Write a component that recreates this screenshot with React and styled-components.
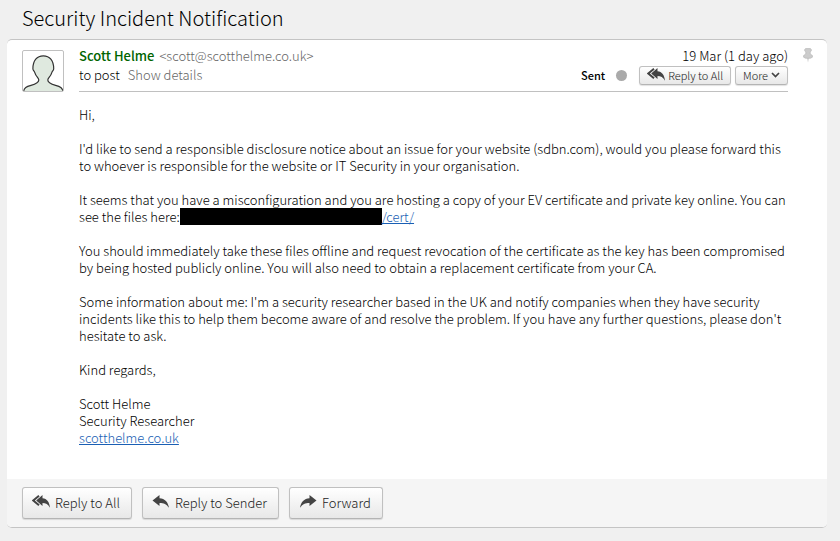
import styled, { createGlobalStyle } from "styled-components";

const GlobalStyle = createGlobalStyle`
  * {
    box-sizing: border-box;
  }

  body {
    margin: 0;
    background: #f0f0f0;
    color: #000;
    font-family: "Noto Sans CJK SC", "Open Sans", sans-serif;
    font-size: 13px;
    font-weight: 300;
    line-height: 17px;
  }
`

const ReplyIcon = ({ size = 18 }) => (
  <svg width={size} height={size} viewBox="0 0 18 18" fill="#444" aria-hidden="true">
    <path d="M.5 7.500 7.500 2v3.200c5.400.3 8.600 3.800 9.500 9.600-2.400-3.600-5.200-4.900-9.500-4.900v3z" />
  </svg>
)

const ReplyAllIcon = ({ size = 18 }) => (
  <svg width={size} height={size} viewBox="0 0 18 18" fill="#444" aria-hidden="true">
    <path d="M4.200 7.500 10.500 2v3.200c4.400.4 7 3.800 7.500 9.600-1.900-3.600-4.200-4.900-7.500-4.900v3z" />
    <path d="M7 2.700 1.300 7.500 7 12.300" fill="none" stroke="#444" strokeWidth="2" />
  </svg>
)

const ForwardIcon = () => (
  <svg width="18" height="18" viewBox="0 0 18 18" fill="#444" aria-hidden="true">
    <path d="M17.500 7.500 10.500 2v3.200C5.100 5.500 1.900 9 1 14.800c2.400-3.600 5.200-4.900 9.500-4.900v3z" />
  </svg>
)

const ChevronIcon = () => (
  <svg width="9" height="6" viewBox="0 0 9 6" fill="none" aria-hidden="true">
    <path d="M1 1 4.500 4.500 8 1" stroke="#444" strokeWidth="1.700" />
  </svg>
)

const PinIcon = () => (
  <svg width="10" height="15" viewBox="0 0 10 15" aria-hidden="true">
    <path d="M4 9.500h2L5 14.500z" fill="#ccc" />
    <path
      d="M2.500.6h5l.8 1v1.200L7.200 4v2l2.200 1.500v1.700L7.500 10.200h-5L.6 9.200V7.500L2.800 6V4L1.700 2.800V1.600z"
      fill="#ccc"
      stroke="#b8b8b8"
      strokeWidth=".7"
    />
  </svg>
)

const Person = () => (
  <svg width="40" height="40" viewBox="0 0 40 40" aria-hidden="true">
    <path
      d="M.5 41C1 36.500 3.500 35.500 8 34.300c5-1.300 7.800-2.500 7.800-5.300 0-2-3-3.500-4-7.300-.5-1.700-1.900-2.200-1.900-4C9.900 9.500 14 4.800 20.300 4.800S30.700 9.500 30.700 17.700c0 1.800-1.400 2.300-1.900 4-1 3.800-4 5.300-4 7.300 0 2.800 2.800 4 7.800 5.300 4.500 1.200 6.900 2.200 7.400 6.700"
      fill="#dfe9df"
      stroke="#333"
      strokeWidth="1.200"
    />
  </svg>
)

const App = () => {
  return (
    <>
      <GlobalStyle />
      <Page>
        <Subject>Security Incident Notification</Subject>
        <Card>
          <Message>
            <Avatar>
              <Person />
            </Avatar>
            <Content>
              <Header>
                <div>
                  <Line>
                    <Sender>Scott Helme</Sender>
                    <Muted>&lt;scott@scotthelme.co.uk&gt;</Muted>
                  </Line>
                  <Line $gap={8}>
                    <span>to post</span>
                    <DetailsLink href="#details">Show details</DetailsLink>
                  </Line>
                </div>
                <Meta>
                  <span>19 Mar (1 day ago)</span>
                  <Actions>
                    <Sent>Sent</Sent>
                    <Dot />
                    <SmallButton type="button">
                      <ReplyAllIcon />
                      Reply to All
                    </SmallButton>
                    <SmallButton type="button">
                      More
                      <ChevronIcon />
                    </SmallButton>
                  </Actions>
                </Meta>
              </Header>
              <Body>
                <p>Hi,</p>
                <p>
                  I'd like to send a responsible disclosure notice about an issue for your
                  website (sdbn.com), would you please forward this to whoever is responsible
                  for the website or IT Security in your organisation.
                </p>
                <p>
                  It seems that you have a misconfiguration and you are hosting a copy of your
                  EV certificate and private key online. You can see the files here:
                  <Redacted />
                  <a href="#cert">/cert/</a>
                </p>
                <p>
                  You should immediately take these files offline and request revocation of the
                  certificate as the key has been compromised by being hosted publicly online.
                  You will also need to obtain a replacement certificate from your CA.
                </p>
                <p>
                  Some information about me: I'm a security researcher based in the UK and
                  notify companies when they have security incidents like this to help them
                  become aware of and resolve the problem. If you have any further questions,
                  please don't hesitate to ask.
                </p>
                <p>Kind regards,</p>
                <p>
                  Scott Helme
                  <br />
                  Security Researcher
                  <br />
                  <a href="#scotthelme">scotthelme.co.uk</a>
                </p>
              </Body>
            </Content>
            <PinButton type="button" aria-label="Pin message">
              <PinIcon />
            </PinButton>
          </Message>
          <Footer>
            <Button type="button">
              <ReplyAllIcon />
              Reply to All
            </Button>
            <Button type="button">
              <ReplyIcon />
              Reply to Sender
            </Button>
            <Button type="button">
              <ForwardIcon />
              Forward
            </Button>
          </Footer>
        </Card>
      </Page>
    </>
  )
}

const Page = styled.main`
  padding: 3px 13px 13px 7px;
`

const Subject = styled.h1`
  margin: 0;
  padding: 0 15px 6px;
  font-size: 20px;
  font-weight: 300;
  line-height: 30px;
`

const Card = styled.article`
  background: #fff;
  border-top: 1px solid #c4c4c4;
  border-bottom: 1px solid #c4c4c4;
  border-radius: 5px;
  overflow: hidden;
`

const Message = styled.div`
  display: flex;
  align-items: flex-start;
  padding: 6px 14px 33px 15px;
`

const Avatar = styled.div`
  flex: none;
  width: 42px;
  height: 42px;
  margin: 4px 15px 0 0;
  border: 1px solid #c0c0c0;
  border-radius: 2px;
  overflow: hidden;

  svg {
    display: block;
  }
`

const Content = styled.div`
  flex: 1;
  min-width: 0;
`

const Header = styled.header`
  display: flex;
  justify-content: space-between;
  height: 46px;
  border-bottom: 1px solid #c0c0c0;
  line-height: 19px;
`

const Line = styled.div`
  display: flex;
  gap: ${({ $gap = 5 }) => $gap}px;
`

const Sender = styled.span`
  color: #006400;
  font-weight: 500;
`

const Muted = styled.span`
  color: #666;
`

const DetailsLink = styled.a`
  color: #666;
  text-decoration: none;
`

const Meta = styled.div`
  display: flex;
  flex-direction: column;
  align-items: flex-end;
`

const Actions = styled.div`
  display: flex;
  align-items: center;
  gap: 4px;
  padding-top: 1px;
`

const Sent = styled.span`
  font-size: 11px;
  font-weight: 500;
`

const Dot = styled.span`
  width: 11px;
  height: 11px;
  margin: 0 8px 0 7px;
  border-radius: 50%;
  background: #aaa;
`

const Button = styled.button`
  display: flex;
  align-items: center;
  gap: 5px;
  height: 32px;
  padding: 0 11px 2px 9px;
  border: 1px solid #c0c0c0;
  border-bottom-color: #b4b4b4;
  border-radius: 3px;
  background: linear-gradient(#fff, #e8e8e8);
  box-shadow: 0 1px 1px rgba(0, 0, 0, 0.12);
  color: #222;
  font-family: inherit;
  font-size: 13px;
  font-weight: inherit;
  line-height: 17px;
  cursor: pointer;
`

const SmallButton = styled(Button)`
  gap: 3px;
  height: 19px;
  padding: 0 7px 1px;
  font-size: 11px;
`

const Body = styled.div`
  padding-top: 14px;

  p {
    margin: 0 0 17px;
  }

  p:last-child {
    margin-bottom: 0;
  }

  a {
    color: #1a5fb4;
  }
`

const Redacted = styled.span`
  display: inline-block;
  width: 202px;
  height: 17px;
  background: #000;
  vertical-align: bottom;
`

const PinButton = styled.button`
  flex: none;
  margin: 2px 0 0 15px;
  padding: 0;
  border: none;
  background: none;
  cursor: pointer;

  svg {
    display: block;
  }
`

const Footer = styled.footer`
  display: flex;
  gap: 10px;
  padding: 8px 15px;
  background: #f5f5f5;
`

export default App;
